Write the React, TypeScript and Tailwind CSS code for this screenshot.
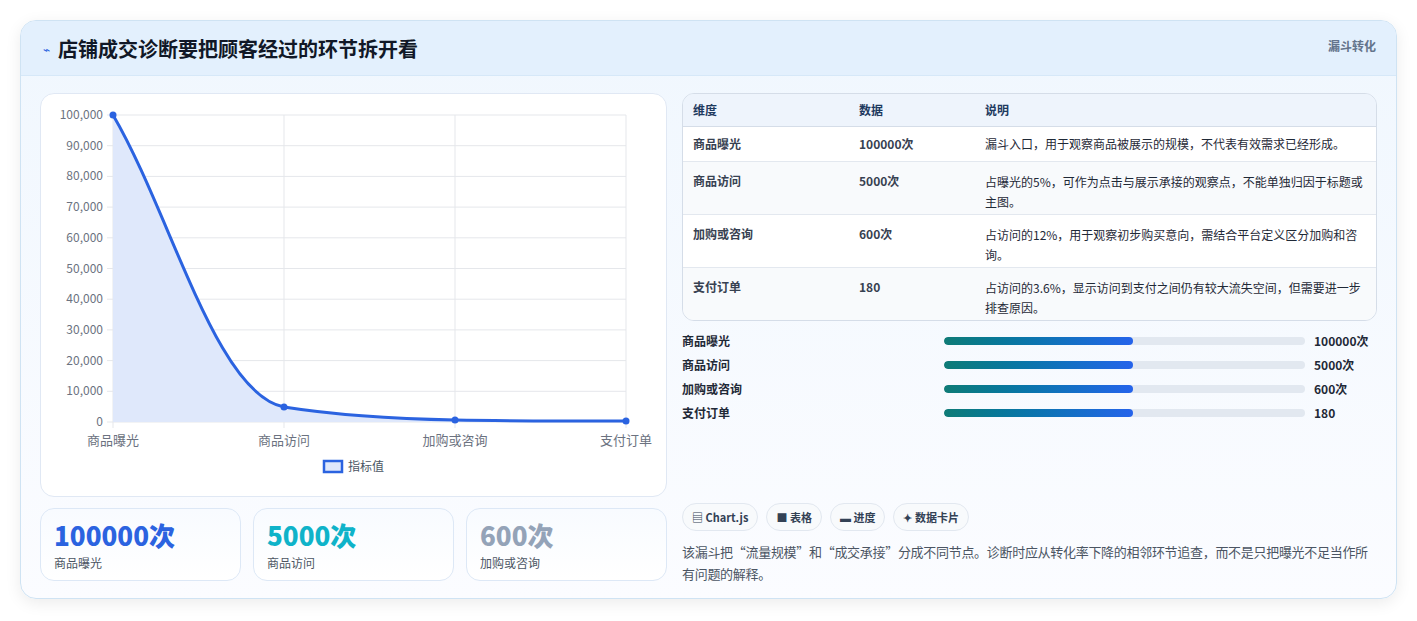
import React from "react";

const F = { fontFamily: '"Noto Sans CJK SC","Noto Sans",sans-serif' };

function Chart() {
  const top = 21, bottom = 328, left = 72, right = 585;
  const ys = Array.from({ length: 11 }, (_, i) => top + ((bottom - top) * i) / 10);
  const labels = ["100,000","90,000","80,000","70,000","60,000","50,000","40,000","30,000","20,000","10,000","0"];
  const xs = [72, 243, 414, 585];
  const xl = ["商品曝光", "商品访问", "加购或咨询", "支付订单"];
  const curve = "M72,21 C130,120 175,300 243,313 C300,322 360,325 414,326 C470,327 530,327 585,327";
  return (
    <svg width="625" height="401" className="block" style={F}>
      {ys.map((y, i) => (
        <g key={i}>
          <line x1={left - 6} x2={right} y1={y} y2={y} stroke="#e5e7eb" />
          <text x={62} y={y + 4} textAnchor="end" fontSize="12" fill="#6b7280">{labels[i]}</text>
        </g>
      ))}
      {xs.map((x, i) => (
        <g key={i}>
          <line x1={x} x2={x} y1={top} y2={bottom + 6} stroke="#e5e7eb" />
          <text x={x} y={351} textAnchor="middle" fontSize="13" fill="#6b7280">{xl[i]}</text>
        </g>
      ))}
      <path d={curve + " L585,328 L72,328 Z"} fill="#dfe8fb" />
      <path d={curve} fill="none" stroke="#2b63e0" strokeWidth="3" />
      {[[72,21],[243,313],[414,326],[585,327]].map(([x,y],i)=>(
        <circle key={i} cx={x} cy={y} r="3.5" fill="#2b63e0" />
      ))}
      <rect x={283} y={367} width={18} height={11} fill="#dfe8fb" stroke="#2b63e0" strokeWidth="2.5" />
      <text x={307} y={377} fontSize="12" fill="#4b5563">指标值</text>
    </svg>
  );
}

const rows = [
  ["商品曝光", "100000次", "漏斗入口，用于观察商品被展示的规模，不代表有效需求已经形成。"],
  ["商品访问", "5000次", "占曝光的5%，可作为点击与展示承接的观察点，不能单独归因于标题或主图。"],
  ["加购或咨询", "600次", "占访问的12%，用于观察初步购买意向，需结合平台定义区分加购和咨询。"],
  ["支付订单", "180", "占访问的3.6%，显示访问到支付之间仍有较大流失空间，但需要进一步排查原因。"],
];

export default function App() {
  return (
    <div className="w-[1417px] h-[621px] bg-white pt-[20px] pl-[20px]" style={F}>
      <div className="w-[1377px] h-[579px] rounded-[16px] border border-[#cfe3f3] overflow-hidden bg-gradient-to-b from-[#f0f7fe] to-[#fbfcff] shadow-[0_4px_16px_rgba(0,0,0,0.08)]">
        <div className="h-[55px] bg-[#e3f0fd] border-b border-[#d6e8f8] flex items-start justify-between px-[20px]">
          <div className="flex items-center gap-[8px] h-[55px]">
            <span className="text-[#2b63e0] text-[12px] ml-[2px]">⌁</span>
            <span className="text-[20px] font-bold text-[#111827]">店铺成交诊断要把顾客经过的环节拆开看</span>
          </div>
          <span className="text-[12px] font-bold text-[#64748b] mt-[16px]">漏斗转化</span>
        </div>
        <div className="flex gap-[15px] px-[19px] pt-[17px]">
          <div className="w-[627px] flex flex-col gap-[11px]">
            <div className="h-[404px] bg-white rounded-[14px] border border-[#e0e8f4]">
              <Chart />
            </div>
            <div className="grid grid-cols-3 gap-[12px]">
              {[["100000次","text-[#2b63e0]","商品曝光"],["5000次","text-[#0fb3c9]","商品访问"],["600次","text-[#94a3b8]","加购或咨询"]].map(([v,c,l])=>(
                <div key={l} className="h-[73px] rounded-[14px] border border-[#dde8f6] bg-gradient-to-b from-[#f8fbff] to-white px-[13px] pt-[9px]">
                  <div className={`text-[26px] font-extrabold leading-[34px] ${c}`}>{v}</div>
                  <div className="text-[12px] text-[#4b5563] mt-[2px]">{l}</div>
                </div>
              ))}
            </div>
          </div>
          <div className="w-[695px] flex flex-col">
            <div className="rounded-[12px] border border-[#d5dde8] overflow-hidden text-[12px]">
              <div className="h-[33px] bg-[#eef4fc] border-b border-[#d5dde8] flex items-center font-bold text-[#1e3a5f]">
                <div className="w-[176px] pl-[10px]">维度</div>
                <div className="w-[126px]">数据</div>
                <div>说明</div>
              </div>
              {rows.map((r, i) => (
                <div key={i} className={`flex ${i ? "border-t border-[#e3e8ef]" : ""} ${i % 2 ? "bg-[#f8fafc]" : "bg-white"} ${i === 0 ? "h-[34px] items-center" : "h-[53px] pt-[10px]"}`}>
                  <div className="w-[176px] pl-[10px] font-bold text-[#374151]">{r[0]}</div>
                  <div className="w-[126px] font-bold text-[#374151]">{r[1]}</div>
                  <div className="w-[382px] text-[#1f2937] leading-[20px]">{r[2]}</div>
                </div>
              ))}
            </div>
            <div className="flex flex-col gap-[8px] mt-[12px]">
              {rows.map((r) => (
                <div key={r[0]} className="flex items-center h-[16px] text-[12px] font-bold text-[#1f2937]">
                  <div className="w-[262px]">{r[0]}</div>
                  <div className="w-[361px] h-[8px] rounded-full bg-[#e2e8f0] overflow-hidden">
                    <div className="w-[189px] h-full rounded-full bg-gradient-to-r from-[#0f7b76] to-[#2563eb]" />
                  </div>
                  <div className="ml-[9px]">{r[1]}</div>
                </div>
              ))}
            </div>
            <div className="flex gap-[8px] mt-[82px]">
              {["▤ Chart.js", "■ 表格", "▬ 进度", "✦ 数据卡片"].map((t) => (
                <span key={t} className="h-[28px] px-[9px] rounded-full border border-[#e2e8f0] bg-[#f8fafc] text-[11px] font-bold text-[#334155] flex items-center">{t}</span>
              ))}
            </div>
            <p className="mt-[10px] text-[13px] leading-[22px] text-[#4b5563] tracking-[-0.3px]">该漏斗把“流量规模”和“成交承接”分成不同节点。诊断时应从转化率下降的相邻环节追查，而不是只把曝光不足当作所有问题的解释。</p>
          </div>
        </div>
      </div>
    </div>
  );
}
